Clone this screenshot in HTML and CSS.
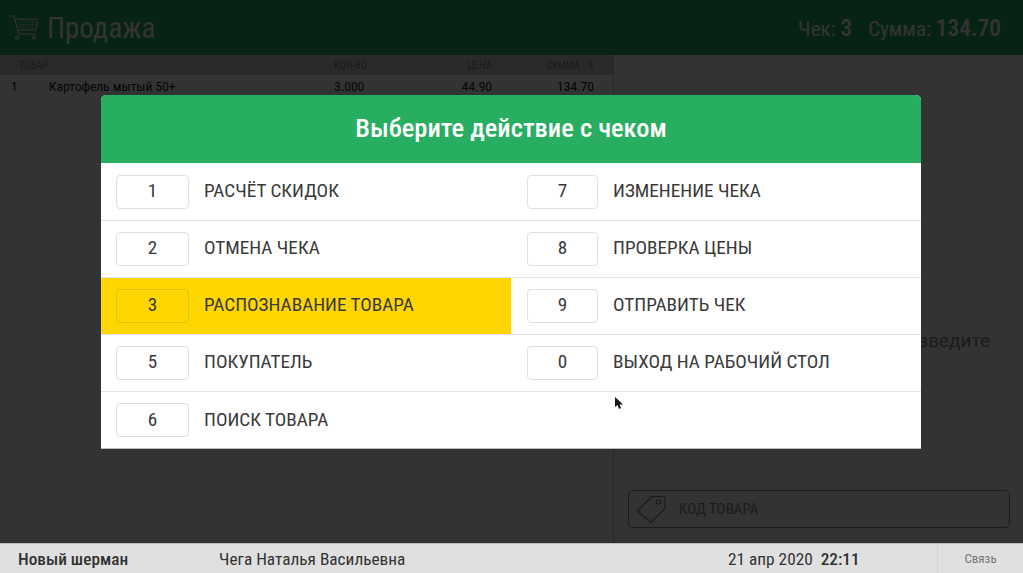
FILE: index.html
```html
<!DOCTYPE html>
<html lang="ru">
<head>
<meta charset="utf-8">
<title>Продажа</title>
<link rel="stylesheet" href="styles.css">
</head>
<body>
<div class="app">
  <header class="topbar">
    <div class="title">
      <svg class="cart" viewBox="0 0 30 26" width="30" height="26" fill="none" stroke="#fff" stroke-width="1.200">
        <path d="M1 1h5l5 18h17"/>
        <path d="M7 4h23l-2 11H10"/>
        <path d="M10 7h18M10.500 9.500h17M11 12h16M13 5v9M16 5v9M19 5v9M22 5v9M25 5v9" stroke-width=".6" stroke-dasharray="1 1"/>
        <circle cx="9" cy="22.500" r="1.400"/><circle cx="26" cy="22.500" r="1.400"/>
      </svg>
      <span class="cond title-text">Продажа</span>
    </div>
    <div class="totals cond">
      <span>Чек: <b>3</b></span>
      <span>Сумма: <b>134.70</b></span>
    </div>
  </header>
  <main class="work">
    <section class="items">
      <div class="row head cond">
        <span class="c-name">ТОВАР</span><span class="c-qty">КОЛ-ВО</span><span class="c-price">ЦЕНА</span><span class="c-sum">СУММА - %</span>
      </div>
      <div class="row item cond">
        <span class="c-idx">1</span><span class="c-title">Картофель мытый 50+</span><span class="c-qty">3.000</span><span class="c-price">44.90</span><span class="c-sum">134.70</span>
      </div>
    </section>
    <aside class="side">
      <p class="hint">введите</p>
      <div class="code">
        <svg viewBox="0 0 30 30" width="30" height="30" fill="none" stroke="#888" stroke-width="1.200">
          <path d="M1.500 17 15.500 2.500H29V14.500L14.500 28.500z" stroke-linejoin="round"/>
          <circle cx="22.500" cy="8" r="2.200"/>
        </svg>
        <span class="cond">КОД ТОВАРА</span>
      </div>
    </aside>
  </main>
  <footer class="status">
    <b class="shop cond">Новый шерман</b>
    <span class="cashier cond">Чега Наталья Васильевна</span>
    <span class="date cond">21 апр 2020 &nbsp;<b>22:11</b></span>
    <span class="link cond">Связь</span>
  </footer>
</div>

<div class="shade">
  <div class="modal">
    <h1 class="modal-title">Выберите действие с чеком</h1>
    <div class="actions cond">
      <div class="action"><kbd>1</kbd><span>РАСЧЁТ СКИДОК</span></div>
      <div class="action"><kbd>7</kbd><span>ИЗМЕНЕНИЕ ЧЕКА</span></div>
      <div class="action"><kbd>2</kbd><span>ОТМЕНА ЧЕКА</span></div>
      <div class="action"><kbd>8</kbd><span>ПРОВЕРКА ЦЕНЫ</span></div>
      <div class="action active"><kbd>3</kbd><span>РАСПОЗНАВАНИЕ ТОВАРА</span></div>
      <div class="action"><kbd>9</kbd><span>ОТПРАВИТЬ ЧЕК</span></div>
      <div class="action"><kbd>5</kbd><span>ПОКУПАТЕЛЬ</span></div>
      <div class="action"><kbd>0</kbd><span>ВЫХОД НА РАБОЧИЙ СТОЛ</span></div>
      <div class="action"><kbd>6</kbd><span>ПОИСК ТОВАРА</span></div>
      <div class="action"></div>
    </div>
  </div>
</div>
<svg class="pointer" viewBox="0 0 9 13" width="9" height="13"><path d="M0 0v10l2.500-2 1.500 4 2-1-1.500-3.500H8z" fill="#111"/></svg>
</body>
</html>
```
FILE: styles.css
```css
* { box-sizing: border-box; }
html, body { margin: 0; height: 100%; overflow: hidden; }
body { font-family: "Roboto", "Liberation Sans", sans-serif; background: #fff; color: #333; }
.cond { font-stretch: condensed; }
.app { display: grid; grid-template-rows: 55px 1fr 30px; height: 573px; }
.topbar { background: #27ae60; display: flex; justify-content: space-between; align-items: center; padding: 0 22px 0 8px; color: #fff; }
.title { display: flex; align-items: center; gap: 9px; }
.title-text { font-size: 29px; color: #fff; }
.totals { display: flex; align-items: baseline; gap: 16px; font-size: 21px; color: #fff; }
.totals b { font-weight: 500; font-size: 23.500px; }
.work { display: grid; grid-template-columns: 614px 1fr; min-height: 0; }
.items { border-right: 1px solid #ccc; }
.row { display: flex; align-items: center; padding-right: 19px; }
.head { height: 20px; background: #d0d0d0; font-size: 10.500px; color: #888; }
.item { height: 24px; padding-bottom: 2px; font-size: 13.500px; background: #fff; color: #222; }
.c-name { width: 334px; padding-left: 19px; }
.c-idx { width: 49px; padding-left: 11px; }
.c-title { width: 285px; }
.c-qty { width: 33px; }
.c-price { width: 125px; text-align: right; }
.c-sum { width: 102px; text-align: right; }
.side { padding: 0 13px 15px 14px; display: flex; flex-direction: column; }
.hint { margin: 274px 20px 0 auto; font-size: 19px; color: #888; white-space: nowrap; }
.code { margin-top: auto; height: 38px; border: 1px solid #888; border-radius: 5px; display: flex; align-items: center; gap: 13px; padding-left: 7px; font-size: 15px; color: #888; }
.status { background: #e0e0e0; border-top: 1px solid #bbb; display: flex; align-items: center; font-size: 17.300px; color: #333; position: relative; z-index: 2; }
.shop { width: 219px; padding-left: 18px; font-size: 17.300px; font-weight: 500; }
.cashier { width: 509px; }
.date { width: 209px; }
.date b { font-weight: 500; }
.link { width: 86px; align-self: stretch; display: flex; align-items: center; justify-content: center; border-left: 1px solid #d4d4d4; font-size: 13px; color: #777; }
.shade { position: absolute; left: 0; top: 0; width: 100%; height: 543px; background: rgba(0, 0, 0, .8); padding: 95px 102px 0 101px; }
.modal { background: #fff; border-radius: 5px 5px 0 0; height: 353px; overflow: hidden; box-shadow: 0 1px 0 #bbb; }
.modal-title { margin: 0; height: 68px; padding-bottom: 4px; background: #27ae60; color: #fff; font-size: 26.500px; font-weight: 500; display: flex; align-items: center; justify-content: center; font-stretch: condensed; }
.actions { display: grid; grid-template-columns: 410px 410px; grid-auto-rows: 57px; padding-top: 1px; }
.action { display: flex; align-items: center; gap: 15px; padding: 0 0 1px 15px; border-bottom: 1px solid #e4e4e4; font-size: 19.200px; color: #3a3a3a; }
.action > span { padding-bottom: 2px; }
.action:nth-child(even) { padding-left: 16px; }
.action:nth-last-child(-n+2) { border-bottom: 0; }
.action.active { background: #ffd600; }
kbd { width: 73px; height: 34px; padding-bottom: 2px; border: 1px solid #e0e0e0; border-radius: 4px; display: flex; align-items: center; justify-content: center; font: inherit; }
.action:nth-child(even) kbd { width: 71px; }
.active kbd { border-color: #e6c200; }
.pointer { position: absolute; left: 615px; top: 397px; }
```
